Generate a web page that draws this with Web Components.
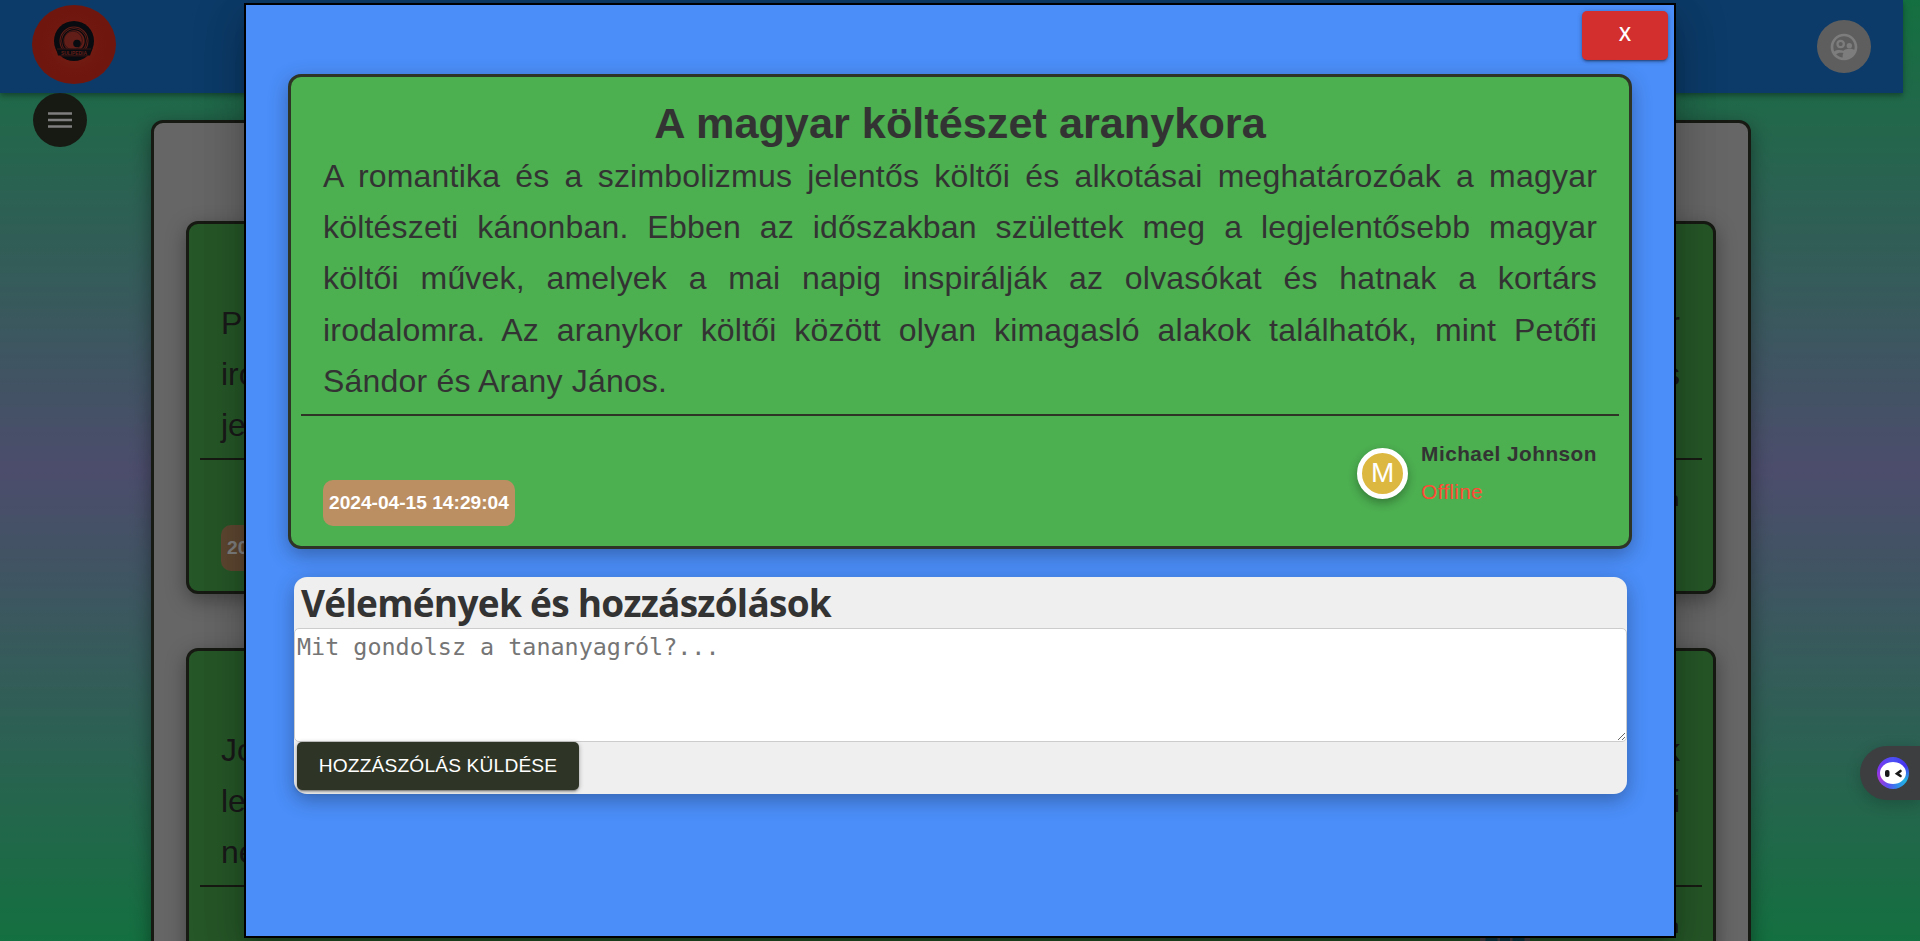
<!DOCTYPE html>
<html lang="hu">
<head>
<meta charset="utf-8">
<title>Tananyag</title>
<style>
html,body{margin:0;height:100%;overflow:hidden}
body{font-family:"Liberation Sans",Arial,sans-serif;color:#333;background:linear-gradient(#28e080,#989ad8 50%,#28e080)}
</style>
</head>
<body>
<page-shell></page-shell>
<lesson-dialog></lesson-dialog>
<chat-launcher></chat-launcher>
<script>
const define=(name,html)=>customElements.define(name,class extends HTMLElement{
  constructor(){super();this.attachShadow({mode:'open'}).innerHTML=html;}
});

define('site-logo',`<style>
:host{display:block;width:84px;height:79px;border-radius:50%;background:radial-gradient(circle,#e6402f 0,#e0301e 45%,#dc2a1c 100%)}
svg{display:block}</style>
<svg width="84" height="79" viewBox="0 0 84 79">
<circle cx="42" cy="36" r="20" fill="#10161e"/>
<circle cx="42" cy="36" r="14.500" fill="#c23a2e"/>
<g fill="none" stroke="#10161e"><circle cx="42" cy="36" r="13.200" stroke-width=".8"/><circle cx="42" cy="36" r="11.300" stroke-width="1.300"/><circle cx="41" cy="35.500" r="9.300" stroke-width=".5"/></g>
<circle cx="45" cy="38.500" r="3.800" fill="#10161e"/>
<path d="M24 43.500h36.500l-2.500 7H26z" fill="#10161e"/>
<path d="M25 44h34M28 50.900h28" stroke="#a5362e" stroke-width=".7"/>
<text x="42" y="49.500" text-anchor="middle" textLength="26" lengthAdjust="spacingAndGlyphs" font-family="Liberation Sans" font-weight="bold" font-size="5.500" fill="#c43d32">SULIPEDIA</text>
</svg>`);

define('site-header',`<style>
:host{display:flex;box-sizing:border-box;width:1903px;height:93px;padding:5px 32px 0;justify-content:space-between;background:#1976d2;box-shadow:0 2px 4px -1px rgba(0,0,0,.2),0 4px 5px rgba(0,0,0,.14),0 1px 10px rgba(0,0,0,.12)}
.user{display:grid;place-items:center;width:54px;height:53px;border-radius:50%;background:#bdbdbd;margin:15px 0 0}
svg{fill:#fafafa;margin-top:1px}</style>
<site-logo></site-logo>
<div class="user"><svg width="32" height="32" viewBox="0 0 24 24"><path d="M12 2C6.480 2 2 6.480 2 12s4.480 10 10 10 10-4.480 10-10S17.520 2 12 2zM4 12c0-4.420 3.580-8 8-8s8 3.580 8 8c0 .730-.110 1.430-.290 2.110-.940-.560-2.310-.860-3.460-.860-1.450 0-3.650.48-4.750 1.490-.94-.32-2.010-.49-3-.49-1.390 0-2.780.4-3.860 1.040C4.230 14.260 4 13.160 4 12zm7 7.930c-1.930-.240-3.640-1.170-4.890-2.530.86-.72 1.900-1.150 3.390-1.150.770 0 1.500.1 2.100.26-.370.560-.6 1.160-.6 1.780z"/><path fill-rule="evenodd" d="M9.500 13c1.930 0 3.250-1.320 3.250-3.250S11.430 6.500 9.500 6.500 6.250 7.820 6.250 9.750 7.570 13 9.500 13zm0-4.800c.9 0 1.500.65 1.500 1.550s-.6 1.550-1.500 1.550S8 10.650 8 9.750s.6-1.550 1.500-1.550z"/><circle cx="16" cy="11" r="2"/></svg></div>`);

define('menu-button',`<style>
:host{display:grid;place-items:center;width:54px;height:54px;border-radius:50%;background:#2e3526}
svg{stroke:#fff;stroke-width:2.700}</style>
<svg width="24" height="18" viewBox="0 0 24 18"><path d="M0 2.500h24M0 9h24M0 15.500h24"/></svg>`);

define('date-chip',`<style>
:host{display:block;box-sizing:border-box;height:46px;padding:0 6px;border-radius:10px;background:#bc8f63;color:#fff;font:bold 19.150px/46px "Liberation Sans",Arial,sans-serif;white-space:nowrap}
</style><slot></slot>`);

define('preview-card',`<style>
:host{display:flex;flex-direction:column;box-sizing:border-box;height:373px;border:3px solid #2e3526;border-radius:12px;background:#4caf50;box-shadow:0 6px 20px rgba(0,0,0,.35);padding:74px 11px 0}
::slotted(p){display:flex;justify-content:space-between;margin:0 22px 0 21px!important;font-size:32px;line-height:51px}
hr{box-sizing:border-box;width:100%;height:2px;flex:none;border:0;background:#2e3526;margin:7px 0 0}
.foot{display:flex;justify-content:space-between;padding:28px 23px 0 21px;font-weight:bold;font-size:20px}
</style>
<slot></slot><hr>
<div class="foot"><slot name="date"><span></span></slot><slot name="author"></slot></div>`);

define('reaction-strip',`<style>
:host{display:block;width:50px;height:20px}
svg{display:block}</style>
<svg width="50" height="20"><path fill="#8c8c96" d="M0 0h50v20H0z"/><path fill="#1a7890" d="M5.500 0h12v20h-12zM20 0h10v20H20zM32.500 0h12v20h-12z"/></svg>`);

define('page-shell',`<style>
:host{display:block;height:100%;overflow:hidden}
menu-button{margin:0 0 0 33px}
main{box-sizing:border-box;width:1600px;height:1200px;margin:-27px 0 0 151px;border:3px solid #2e3526;border-radius:12px;background:#ccc;padding:98px 32px;box-shadow:0 6px 20px rgba(0,0,0,.4)}
preview-card+preview-card{margin-top:54px}
date-chip{margin-top:37px}
.by{display:flex;gap:137px}
reaction-strip{margin-top:23px}</style>
<site-header></site-header>
<menu-button></menu-button>
<main>
<preview-card><p><span>P</span><span>r</span></p><p><span>iro</span><span>s</span></p><p>je</p><date-chip slot="date">2024-</date-chip><span slot="author">n</span></preview-card>
<preview-card><p><span>Jo</span><span>k</span></p><p><span>le</span><span>i</span></p><p>ne</p><span slot="author" class="by"><reaction-strip></reaction-strip><span>n</span></span></preview-card>
</main>`);

define('author-badge',`<style>
:host{display:flex;align-items:center;gap:13px}
.avatar{display:grid;place-items:center;box-sizing:border-box;width:51px;height:51px;border:5px solid #fff;border-radius:50%;background:#dcb841;color:#fff;font-size:28px;line-height:1;box-shadow:0 4px 10px rgba(0,0,0,.3)}
.name{font-weight:bold;font-size:20.800px;line-height:38px;letter-spacing:.48px;white-space:nowrap}
.state{font-size:20.800px;line-height:38px;letter-spacing:.3px;color:#ff4a36}</style>
<div class="avatar">M</div>
<div><div class="name"><slot></slot></div><div class="state"><slot name="state"></slot></div></div>`);

define('lesson-card',`<style>
:host{display:flex;flex-direction:column;box-sizing:border-box;width:1344px;height:475px;border:3px solid #2e3526;border-radius:13px;background:#4caf50;box-shadow:0 6px 20px rgba(0,0,0,.3);padding:21px 10px 0}
h2{margin:0 0 2px;text-align:center;font-size:43.250px;line-height:51px}
p{margin:0 22px;font-size:32px;line-height:51.200px;text-align:justify;letter-spacing:.2px}
hr{width:100%;height:2px;border:0;margin:7px 0 0;background:#2e3526}
.foot{display:flex;justify-content:space-between;align-items:flex-start;padding:19px 22px 0}
date-chip{margin-top:45px}</style>
<h2><slot name="title"></slot></h2><p><slot></slot></p><hr>
<div class="foot"><date-chip>2024-04-15 14:29:04</date-chip><author-badge>Michael Johnson<span slot="state">Offline</span></author-badge></div>`);

define('action-button',`<style>
:host{display:block}
button{display:block;box-sizing:border-box;width:100%;height:100%;border:0;border-radius:5px;padding:0 0 var(--lift,0px);background:var(--bg);color:#fff;font:var(--weight,400) 19.200px/1 var(--face,"Liberation Sans"),sans-serif;letter-spacing:.15px;box-shadow:0 3px 1px -2px rgba(0,0,0,.2),0 2px 2px rgba(0,0,0,.14),0 1px 5px rgba(0,0,0,.3)}</style>
<button><slot></slot></button>`);

define('comment-form',`<style>
:host{display:flex;flex-direction:column;box-sizing:border-box;width:1333px;height:217px;border-radius:13px;background:#efefef;box-shadow:0 6px 20px rgba(0,0,0,.3)}
h3{margin:0 0 0 7px;padding-top:1px;font:bold 37px/50px "Open Sans",sans-serif;letter-spacing:-.73px}
textarea{display:block;box-sizing:border-box;width:100%;height:114px;border:1px solid #ccc;border-radius:5px;margin:0;padding:2px;background:#fff;font:23.400px/32px "DejaVu Sans Mono",monospace;outline:0}
textarea::placeholder{color:#757575}
action-button{width:282px;height:48px;margin-left:3px;--bg:#2e3526;--lift:1px}</style>
<h3>Vélemények és hozzászólások</h3>
<textarea placeholder="Mit gondolsz a tananyagról?..."></textarea>
<action-button>HOZZÁSZÓLÁS KÜLDÉSE</action-button>`);

define('lesson-dialog',`<style>
:host{position:absolute;inset:0;display:block;background:rgba(0,0,0,.5);overflow:hidden}
section{display:flex;flex-direction:column;align-items:center;box-sizing:border-box;width:1432px;height:935px;margin:3px 0 0 244px;border:2px solid #000;background:#4b8ef9;padding-top:6px;box-shadow:0 11px 15px -7px rgba(0,0,0,.2),0 24px 38px 3px rgba(0,0,0,.14),0 9px 46px 8px rgba(0,0,0,.12)}
.close{align-self:flex-end;width:86px;height:49px;margin:0 6px 14px 0;--bg:#d32f2f;--face:"Open Sans";--weight:600;--lift:4px}
comment-form{margin:28px 0 0 1px}</style>
<section><action-button class="close">X</action-button>
<lesson-card><span slot="title">A magyar költészet aranykora</span>A romantika és a szimbolizmus jelentős költői és alkotásai meghatározóak a magyar költészeti kánonban. Ebben az időszakban születtek meg a legjelentősebb magyar költői&nbsp;művek, amelyek a mai napig inspirálják az olvasókat és hatnak a kortárs irodalomra. Az aranykor költői között olyan kimagasló alakok találhatók, mint Petőfi Sándor és Arany János.</lesson-card>
<comment-form></comment-form></section>`);

define('chat-launcher',`<style>
:host{position:absolute;right:0;top:746px;display:flex;align-items:center;box-sizing:border-box;width:60px;height:54px;padding-left:17px;border-radius:27px 0 0 27px;background:#3d3e40;box-shadow:0 4px 16px rgba(0,0,0,.2)}
.ring{display:grid;place-items:center;width:32px;height:32px;border-radius:50%;background:conic-gradient(#4a50f5,#4631ee 60deg,#22b4e2 120deg,#2f8bea 160deg,#5b50f0 200deg,#a53ad8 245deg,#7a35ee 290deg,#4a50f5)}</style>
<div class="ring"><svg width="32" height="32" viewBox="0 0 32 32"><ellipse cx="16" cy="16" rx="13" ry="11" fill="#fff"/><rect x="8" y="13" width="4.500" height="7" rx="2" fill="#191919"/><path d="M23.500 14l-3.500 2.700 3.500 2.300" fill="none" stroke="#191919" stroke-width="2.600" stroke-linecap="round"/></svg></div>`);
</script>
</body>
</html>
